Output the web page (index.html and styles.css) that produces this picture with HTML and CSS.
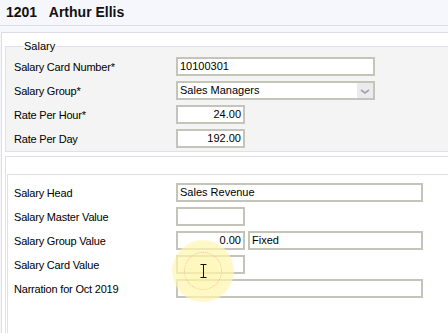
FILE: index.html
```html
<!DOCTYPE html>
<html lang="en">
<head>
    <meta charset="UTF-8">
    <title>Salary Card</title>
    <link rel="stylesheet" href="styles.css">
</head>
<body>
<div class="header">1201&nbsp;&nbsp;&nbsp;Arthur Ellis</div>
<div class="page">
    <div class="panel">
        <fieldset class="group">
            <legend>Salary</legend>
            <div class="rows">
                <label>Salary Card Number*</label>
                <div class="box wide">10100301</div>
                <label>Salary Group*</label>
                <div class="box wide combo">
                    <span>Sales Managers</span>
                    <span class="drop">
                        <svg width="16" height="16" viewBox="0 0 16 16">
                            <path d="M4 7 L8 10 L12 7" fill="none" stroke="#a2a2aa" stroke-width="1.6"/>
                        </svg>
                    </span>
                </div>
                <label>Rate Per Hour*</label>
                <div class="box num">24.00</div>
                <label>Rate Per Day</label>
                <div class="box num">192.00</div>
            </div>
        </fieldset>
        <div class="detail">
            <div class="detailInner">
                <div class="rows">
                    <label>Salary Head</label>
                    <div class="box long">Sales Revenue</div>
                    <label>Salary Master Value</label>
                    <div class="box num"></div>
                    <label>Salary Group Value</label>
                    <div class="pair">
                        <div class="box num">0.00</div>
                        <div class="box rest">Fixed</div>
                    </div>
                    <label>Salary Card Value</label>
                    <div class="box num"></div>
                    <label>Narration for Oct 2019</label>
                    <div class="box long"></div>
                </div>
            </div>
        </div>
    </div>
</div>
<div class="glow">
    <div class="ring"></div>
    <svg class="beam" width="9" height="16" viewBox="0 0 9 16">
        <path d="M1.5 1.5 H7.5 M4.5 1.5 V14.5 M1.5 14.5 H7.5" fill="none" stroke="#111" stroke-width="1"/>
    </svg>
</div>
</body>
</html>
```
FILE: styles.css
```css
*{
    margin: 0;
    padding: 0;
    box-sizing: border-box;
}
body{
    font-family: "Liberation Sans", Arial, sans-serif;
    font-size: 11px;
    color: #000;
    background: #fff;
    position: relative;
    height: 333px;
    overflow: hidden;
}
.header{
    height: 26px;
    line-height: 25px;
    padding-left: 6px;
    font-size: 14px;
    font-weight: bold;
    color: #111;
    background: #f6f7fd;
    border-bottom: 1px solid #dcdde6;
}
.page{
    background: #f6f7fd;
    padding-top: 6px;
}
.panel{
    margin-left: 1px;
    background: #fff;
    border-top: 1px solid #dcdde6;
    border-left: 1px solid #dcdde6;
    padding: 7px 0 0 3px;
    height: 301px;
}
.group{
    background: #f4f4f4;
    border: 1px solid #e0e0e8;
    border-right: 0;
    padding: 4px 0 3px 8px;
    margin-bottom: 4px;
}
.group legend{
    margin-left: 9px;
    padding: 0 2px 0 1px;
    font-size: 11px;
    line-height: 13px;
}
.rows{
    display: grid;
    grid-template-columns: 162px auto;
    grid-auto-rows: 19px;
    row-gap: 5px;
    align-items: center;
    justify-items: start;
    letter-spacing: -0.2px;
}
.box{
    height: 19px;
    line-height: 15px;
    border: 2px solid #c4c4bb;
    background: #fff;
    padding: 0 2px;
    white-space: nowrap;
    letter-spacing: 0;
}
.wide{
    width: 199px;
}
.long{
    width: 247px;
}
.num{
    width: 69px;
    text-align: right;
}
.rest{
    width: 175px;
}
.pair{
    display: flex;
    gap: 3px;
}
.combo{
    display: flex;
    justify-content: space-between;
    padding-right: 0;
}
.drop{
    width: 16px;
    height: 15px;
    background: #ebebef;
    display: flex;
    align-items: center;
    justify-content: center;
}
.detail{
    border: 1px solid #e0e0e8;
    border-right: 0;
    border-bottom: 0;
    padding: 17px 0 0 1px;
    height: 180px;
}
.detailInner{
    border-top: 1px solid #e0e0e8;
    border-left: 1px solid #e0e0e8;
    padding: 8px 0 0 6px;
    height: 160px;
}
.glow{
    position: absolute;
    left: 172px;
    top: 240px;
    width: 62px;
    height: 62px;
    border-radius: 50%;
    background: radial-gradient(circle, rgba(255,245,165,0.8) 0%, rgba(255,246,175,0.7) 65%, rgba(255,250,205,0.2) 100%);
    pointer-events: none;
}
.ring{
    position: absolute;
    left: 12px;
    top: 12px;
    width: 38px;
    height: 38px;
    border-radius: 50%;
    border: 1px dotted rgba(235,150,120,0.55);
}
.beam{
    position: absolute;
    left: 27px;
    top: 23px;
}
```
